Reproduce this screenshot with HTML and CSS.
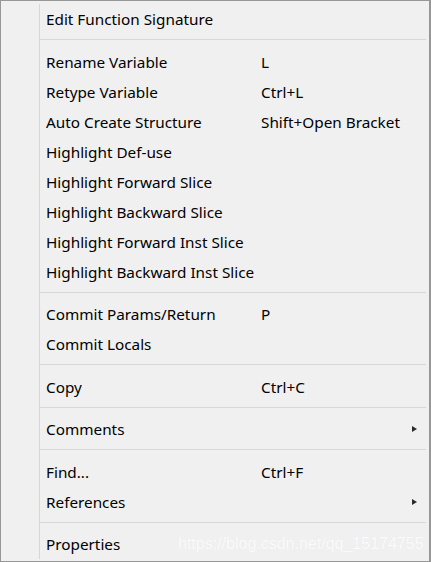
FILE: index.html
```html
<!DOCTYPE html>
<html>
<head>
<meta charset="utf-8">
<link rel="stylesheet" href="styles.css">
</head>
<body>
<div class="menu">
  <div class="list">
    <div class="item"><span class="label">Edit Function Signature</span></div>
    <div class="sep"></div>
    <div class="item"><span class="label">Rename Variable</span><span class="key">L</span></div>
    <div class="item"><span class="label">Retype Variable</span><span class="key">Ctrl+L</span></div>
    <div class="item"><span class="label">Auto Create Structure</span><span class="key">Shift+Open Bracket</span></div>
    <div class="item"><span class="label">Highlight Def-use</span></div>
    <div class="item"><span class="label">Highlight Forward Slice</span></div>
    <div class="item"><span class="label">Highlight Backward Slice</span></div>
    <div class="item"><span class="label">Highlight Forward Inst Slice</span></div>
    <div class="item"><span class="label">Highlight Backward Inst Slice</span></div>
    <div class="sep"></div>
    <div class="item"><span class="label">Commit Params/Return</span><span class="key">P</span></div>
    <div class="item"><span class="label">Commit Locals</span></div>
    <div class="sep"></div>
    <div class="item"><span class="label">Copy</span><span class="key">Ctrl+C</span></div>
    <div class="sep"></div>
    <div class="item"><span class="label">Comments</span><span class="key"></span><span class="arrow"></span></div>
    <div class="sep"></div>
    <div class="item"><span class="label">Find...</span><span class="key">Ctrl+F</span></div>
    <div class="item"><span class="label">References</span><span class="key"></span><span class="arrow"></span></div>
    <div class="sep"></div>
    <div class="item"><span class="label">Properties</span></div>
  </div>
  <div class="watermark">https://blog.csdn.net/qq_15174755</div>
</div>
</body>
</html>
```
FILE: styles.css
```css
html, body {
  margin: 0;
  padding: 0;
  background: #f0f0f0;
}
.menu {
  position: relative;
  box-sizing: border-box;
  width: 431px;
  height: 562px;
  background: #f0f0f0;
  border: 1px solid #979797;
  border-right-width: 2px;
  padding: 3px 3px 2px 38px;
  font-family: "Noto Sans", "Open Sans", sans-serif;
  font-size: 15.3px;
  color: #000;
}
.list {
  display: flex;
  flex-direction: column;
  height: 100%;
  border-left: 1px solid #d7d7d7;
}
.item {
  display: flex;
  align-items: center;
  height: 30px;
  line-height: 30px;
  padding: 0 9px 0 6px;
  white-space: nowrap;
}
.label {
  flex: none;
  width: 215px;
}
.key {
  flex: 1;
}
.arrow {
  flex: none;
  width: 0;
  height: 0;
  border-left: 5px solid #2b2b2b;
  border-top: 3.5px solid transparent;
  border-bottom: 3.5px solid transparent;
}
.sep {
  flex: none;
  box-sizing: border-box;
  height: 12.5px;
  padding-top: 5.25px;
}
.sep::after {
  content: "";
  display: block;
  height: 1px;
  background: #d7d7d7;
}
.watermark {
  position: absolute;
  left: 177px;
  top: 534px;
  font-family: "Liberation Sans", Arial, sans-serif;
  font-size: 16px;
  line-height: 18px;
  color: #fbfbfb;
  text-shadow: 0 0 1px rgba(0, 0, 0, 0.05);
  white-space: nowrap;
}
```
